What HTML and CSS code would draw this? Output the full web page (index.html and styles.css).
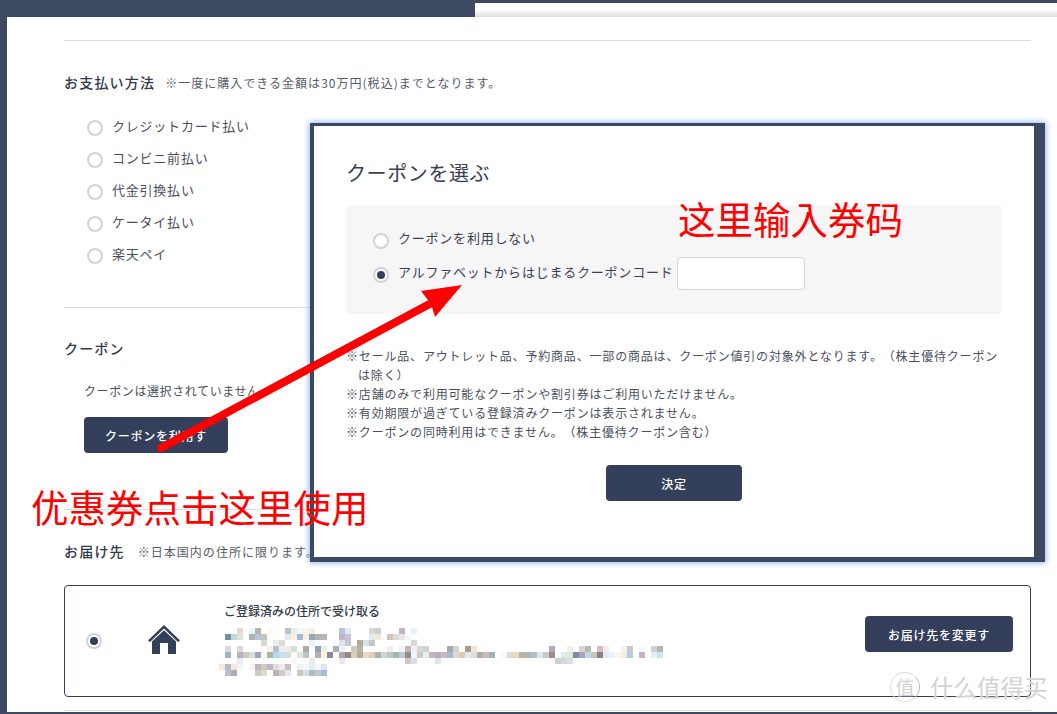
FILE: index.html
```html
<!DOCTYPE html>
<html lang="ja">
<head>
  <meta charset="UTF-8" />
  <meta name="viewport" content="width=device-width, initial-scale=1.0" />
  <title>クーポンを選ぶ</title>
  <link rel="stylesheet" href="styles.css">
</head>
<body>
  <div class="topbar"><div class="topbar-fill"></div></div>

  <main class="sheet">
    <hr class="rule rule-first">

    <!-- Payment -->
    <section>
      <div class="section-head section-head-low">
        <h2>お支払い方法</h2>
        <span class="section-note">※一度に購入できる金額は30万円(税込)までとなります。</span>
      </div>
      <ul class="radio-list">
        <li><span class="radio"></span>クレジットカード払い</li>
        <li><span class="radio"></span>コンビニ前払い</li>
        <li><span class="radio"></span>代金引換払い</li>
        <li><span class="radio"></span>ケータイ払い</li>
        <li><span class="radio"></span>楽天ペイ</li>
      </ul>
    </section>

    <hr class="rule rule-payment">

    <!-- Coupon -->
    <section class="coupon">
      <div class="section-head">
        <h2>クーポン</h2>
      </div>
      <p class="coupon-state">クーポンは選択されていません</p>
      <button class="btn btn-coupon" type="button">クーポンを利用す</button>
    </section>

    <hr class="rule rule-coupon">

    <!-- Delivery -->
    <section>
      <div class="section-head section-head-low">
        <h2>お届け先</h2>
        <span class="section-note section-note-wide">※日本国内の住所に限ります。</span>
      </div>
      <div class="address-card">
        <span class="radio radio-on"></span>
        <svg class="house" viewBox="0 0 32 29" aria-hidden="true">
          <path d="M0 15.5 16 0l16 15.500-2 1.600L16 3.600 2 17.100z" fill="#343f5b"/>
          <path d="M4 16.500 16 5.200l12 11.300V29h-8v-11h-8v11H4z" fill="#343f5b"/>
        </svg>
        <div class="address-text">
          <strong>ご登録済みの住所で受け取る</strong>
          <svg class="mosaic" viewBox="0 0 450 48" aria-hidden="true">
            <g transform="translate(1 0)">
              <rect x="12" y="0" fill="#e8d8d0"/><rect x="24" y="0" fill="#e8f4fa"/><rect x="30" y="0" fill="#b0b4b0"/><rect x="42" y="0" fill="#fdf8f0"/><rect x="60" y="0" fill="#b8c4d4"/><rect x="66" y="0" fill="#e8eee4"/><rect x="72" y="0" fill="#eefafc"/><rect x="78" y="0" fill="#f4f4f0"/><rect x="84" y="0" fill="#f8eee0"/><rect x="114" y="0" fill="#b8c4dc"/><rect x="120" y="0" fill="#e8e8ee"/><rect x="144" y="0" fill="#d8d8d0"/><rect x="150" y="0" fill="#c4d0d4"/><rect x="174" y="0" fill="#b8b8c4"/><rect x="186" y="0" fill="#e4f4fc"/>
              <rect x="0" y="6" fill="#7090a8"/><rect x="6" y="6" fill="#c8d4dc"/><rect x="12" y="6" fill="#dce4e0"/><rect x="24" y="6" fill="#b0b4b0"/><rect x="30" y="6" fill="#b8c4dc"/><rect x="36" y="6" fill="#c0c4b8"/><rect x="60" y="6" fill="#e8e8f0"/><rect x="66" y="6" fill="#fcf0dc"/><rect x="72" y="6" fill="#a8b8dc"/><rect x="78" y="6" fill="#fcf0e0"/><rect x="84" y="6" fill="#94aabc"/><rect x="90" y="6" fill="#b0b4b0"/><rect x="96" y="6" fill="#b4b8b4"/><rect x="114" y="6" fill="#c8b0c0"/><rect x="120" y="6" fill="#c4c4dc"/><rect x="144" y="6" fill="#e0ecf4"/><rect x="150" y="6" fill="#f4e8d0"/><rect x="162" y="6" fill="#d0c4b4"/><rect x="168" y="6" fill="#dcdcd8"/><rect x="174" y="6" fill="#ece4e8"/><rect x="180" y="6" fill="#f4f8fc"/>
              <rect x="36" y="12" fill="#d8d8cc"/><rect x="48" y="12" fill="#f4e8e4"/><rect x="54" y="12" fill="#dcdcdc"/><rect x="84" y="12" fill="#e8f4fc"/><rect x="114" y="12" fill="#dce4f0"/><rect x="120" y="12" fill="#c8c8d0"/><rect x="132" y="12" fill="#b0aca4"/><rect x="138" y="12" fill="#dce0e8"/><rect x="144" y="12" fill="#c4c4cc"/><rect x="186" y="12" fill="#d8d8d8"/>
              <rect x="0" y="18" fill="#d8dcdc"/><rect x="12" y="18" fill="#d8dcdc"/><rect x="42" y="18" fill="#f8f0e8"/><rect x="48" y="18" fill="#b8c0cc"/><rect x="54" y="18" fill="#ecf0f4"/><rect x="60" y="18" fill="#f8ecd8"/><rect x="66" y="18" fill="#d0e0e0"/><rect x="78" y="18" fill="#a8aca4"/><rect x="90" y="18" fill="#90a4b4"/><rect x="96" y="18" fill="#e8f0f4"/><rect x="108" y="18" fill="#a8b0b8"/><rect x="114" y="18" fill="#f0f0f4"/><rect x="126" y="18" fill="#d0ccb8"/><rect x="132" y="18" fill="#b4b4a8"/><rect x="162" y="18" fill="#f0f0f0"/><rect x="174" y="18" fill="#f0f4f8"/><rect x="180" y="18" fill="#c8b4b4"/><rect x="186" y="18" fill="#ecf0f8"/><rect x="192" y="18" fill="#d8d8d4"/><rect x="198" y="18" fill="#d0d0dc"/><rect x="222" y="18" fill="#a0a8b0"/><rect x="228" y="18" fill="#d4d4c8"/><rect x="240" y="18" fill="#a89c8c"/><rect x="246" y="18" fill="#ece4e0"/><rect x="324" y="18" fill="#b0a8c8"/><rect x="342" y="18" fill="#f0f4e8"/><rect x="354" y="18" fill="#d8d4d0"/><rect x="360" y="18" fill="#b8b8ac"/><rect x="372" y="18" fill="#d8bcc0"/><rect x="378" y="18" fill="#f4ece8"/><rect x="396" y="18" fill="#f4f4ec"/><rect x="402" y="18" fill="#c8c8c8"/><rect x="414" y="18" fill="#f0fcfc"/><rect x="426" y="18" fill="#ccd0d8"/><rect x="432" y="18" fill="#b0b8a8"/>
              <rect x="0" y="24" fill="#9cb4c8"/><rect x="12" y="24" fill="#bcb0b8"/><rect x="18" y="24" fill="#ccc8c4"/><rect x="24" y="24" fill="#dcdcdc"/><rect x="30" y="24" fill="#a0a8c0"/><rect x="36" y="24" fill="#fcfcf0"/><rect x="42" y="24" fill="#a8b8a8"/><rect x="48" y="24" fill="#b4d8ec"/><rect x="54" y="24" fill="#c8e0f0"/><rect x="60" y="24" fill="#d8dcdc"/><rect x="66" y="24" fill="#fafcf8"/><rect x="72" y="24" fill="#e4e4e0"/><rect x="78" y="24" fill="#bcc4cc"/><rect x="90" y="24" fill="#b8b0ac"/><rect x="96" y="24" fill="#fcf4dc"/><rect x="102" y="24" fill="#8888a4"/><rect x="114" y="24" fill="#b0a4a8"/><rect x="120" y="24" fill="#948890"/><rect x="126" y="24" fill="#dcd0b0"/><rect x="132" y="24" fill="#b0aca0"/><rect x="138" y="24" fill="#ecd8c4"/><rect x="144" y="24" fill="#dcd0b8"/><rect x="150" y="24" fill="#b0b0a4"/><rect x="156" y="24" fill="#ccd8d8"/><rect x="162" y="24" fill="#c4c4c0"/><rect x="168" y="24" fill="#a4b4bc"/><rect x="174" y="24" fill="#c0c8d0"/><rect x="180" y="24" fill="#889088"/><rect x="186" y="24" fill="#eef4fa"/><rect x="192" y="24" fill="#ccccc4"/><rect x="198" y="24" fill="#e4f4ec"/><rect x="204" y="24" fill="#c8b4c4"/><rect x="210" y="24" fill="#c0aac0"/><rect x="216" y="24" fill="#c8b8c8"/><rect x="222" y="24" fill="#a8b8cc"/><rect x="228" y="24" fill="#d8d8d8"/><rect x="234" y="24" fill="#e4c8a8"/><rect x="240" y="24" fill="#dceaf4"/><rect x="246" y="24" fill="#e4dcd8"/><rect x="252" y="24" fill="#acb0a8"/><rect x="258" y="24" fill="#d0b8c0"/><rect x="264" y="24" fill="#a4b4b4"/><rect x="276" y="24" fill="#f4fafc"/><rect x="282" y="24" fill="#dcdcdc"/><rect x="288" y="24" fill="#f0d8b4"/><rect x="294" y="24" fill="#b8b4a8"/><rect x="300" y="24" fill="#b8b4b0"/><rect x="306" y="24" fill="#b0c0d0"/><rect x="312" y="24" fill="#e0e4ec"/><rect x="318" y="24" fill="#c4ccd0"/><rect x="324" y="24" fill="#9c8c88"/><rect x="336" y="24" fill="#e0ece0"/><rect x="342" y="24" fill="#e0e8dc"/><rect x="348" y="24" fill="#7c8ca4"/><rect x="354" y="24" fill="#a8a4b8"/><rect x="360" y="24" fill="#c0d8ec"/><rect x="366" y="24" fill="#c8c4b4"/><rect x="372" y="24" fill="#8c7c94"/><rect x="378" y="24" fill="#e0e8f4"/><rect x="384" y="24" fill="#e4f4fa"/><rect x="390" y="24" fill="#f8f8e8"/><rect x="396" y="24" fill="#f0f0e0"/><rect x="402" y="24" fill="#b4cce4"/><rect x="414" y="24" fill="#c8b0c0"/><rect x="426" y="24" fill="#e4ecf4"/><rect x="432" y="24" fill="#cce4f8"/>
              <rect x="12" y="30" fill="#e8ecf4"/><rect x="66" y="30" fill="#f4fafc"/><rect x="84" y="30" fill="#e8e8e8"/><rect x="114" y="30" fill="#e8e8f0"/><rect x="180" y="30" fill="#d0c8c8"/><rect x="186" y="30" fill="#dcdce4"/><rect x="210" y="30" fill="#dce4e8"/><rect x="330" y="30" fill="#ccd0d4"/><rect x="336" y="30" fill="#d8d8dc"/><rect x="342" y="30" fill="#dce0ec"/>
              <rect x="-6" y="36" fill="#f8e8d8"/><rect x="0" y="36" fill="#b4bcc8"/><rect x="6" y="36" fill="#f8e8d0"/><rect x="12" y="36" fill="#eefaf8"/><rect x="24" y="36" fill="#fcf4ec"/><rect x="30" y="36" fill="#b8b8c0"/><rect x="36" y="36" fill="#d4ccb8"/><rect x="42" y="36" fill="#c0b4d0"/><rect x="48" y="36" fill="#e4dcd8"/><rect x="54" y="36" fill="#f0ecec"/><rect x="60" y="36" fill="#c8bcc0"/><rect x="72" y="36" fill="#e8f4f8"/><rect x="78" y="36" fill="#f0f8fc"/><rect x="84" y="36" fill="#e0f0f4"/><rect x="90" y="36" fill="#f0fafc"/><rect x="96" y="36" fill="#e0e4f0"/>
              <rect x="0" y="42" fill="#b8c0d8"/><rect x="6" y="42" fill="#b4a8b8"/><rect x="30" y="42" fill="#d0ccc4"/><rect x="36" y="42" fill="#d8dccc"/><rect x="48" y="42" fill="#b4b4bc"/><rect x="54" y="42" fill="#d8c8c0"/><rect x="60" y="42" fill="#e4e8f4"/><rect x="72" y="42" fill="#ccc8c0"/><rect x="78" y="42" fill="#d8e0e4"/><rect x="84" y="42" fill="#b0bcc8"/><rect x="90" y="42" fill="#c0c8d0"/><rect x="96" y="42" fill="#a8bcdc"/>
            </g>
          </svg>
        </div>
        <button class="btn btn-address" type="button">お届け先を変更す</button>
      </div>
    </section>

    <hr class="rule rule-last">
  </main>

  <!-- Coupon dialog -->
  <div class="modal" role="dialog" aria-label="クーポンを選ぶ">
    <h3>クーポンを選ぶ</h3>
    <div class="modal-panel">
      <div class="modal-row modal-row-off"><span class="radio"></span><span class="row-label">クーポンを利用しない</span></div>
      <div class="modal-row">
        <span class="radio radio-on"></span><span class="row-label">アルファベットからはじまるクーポンコード</span>
        <input class="code-input" type="text" aria-label="クーポンコード">
      </div>
    </div>
    <ul class="modal-notes">
      <li>※セール品、アウトレット品、予約商品、一部の商品は、クーポン値引の対象外となります。（株主優待クーポンは除く）</li>
      <li>※店舗のみで利用可能なクーポンや割引券はご利用いただけません。</li>
      <li>※有効期限が過ぎている登録済みクーポンは表示されません。</li>
      <li>※クーポンの同時利用はできません。（株主優待クーポン含む）</li>
    </ul>
    <button class="btn btn-decide" type="button">決定</button>
  </div>

  <!-- Annotations drawn over the screenshot -->
  <svg class="arrow" viewBox="0 0 1057 714" aria-hidden="true">
    <line x1="161" y1="448" x2="437" y2="300" stroke="#f00" stroke-width="8" stroke-linecap="round"/>
    <polygon points="462,285 421,291 431,304 435,317" fill="#f00"/>
  </svg>
  <p class="note-red note-input">这里输入券码</p>
  <p class="note-red note-click">优惠券点击这里使用</p>

  <div class="watermark"><span class="watermark-mark">值</span>什么值得买</div>
</body>
</html>
```

FILE: styles.css
```css
* {
  box-sizing: border-box;
}

body {
  margin: 0;
  width: 1057px;
  height: 714px;
  overflow: hidden;
  position: relative;
  display: flex;
  flex-direction: column;
  background-color: #3d4861;
  color: #3a4050;
  font-family: "Noto Sans CJK JP", "Noto Sans", sans-serif;
  text-spacing-trim: space-all;
}

h2, h3, p, ul {
  margin: 0;
  padding: 0;
}

ul {
  list-style: none;
}

.topbar {
  height: 17px;
  padding: 3px 0 0 475px;
}

.topbar-fill {
  height: 14px;
  background: linear-gradient(#fff 45%, #dcdcdc);
}

.sheet {
  height: 695px;
  margin-left: 7px;
  padding: 0 26px 0 57px;
  background-color: #fff;
  overflow: hidden;
}

.rule {
  margin: 0;
  border: 0;
  border-top: 1px solid #ddd;
}

.rule-first { margin-top: 23px; }
.rule-payment { margin-top: 41px; }
.rule-coupon { margin-top: 56px; }
.rule-last { margin-top: 13px; }

.section-head {
  display: flex;
  align-items: baseline;
  gap: 10px;
  height: 22px;
  line-height: 18px;
  margin-top: 31px;
}

.section-head-low {
  margin-top: 32px;
}

.section-head h2 {
  font-size: 14px;
  font-weight: 500;
  letter-spacing: 0.085em;
  color: #333a4a;
}

.section-note {
  font-size: 12px;
  letter-spacing: 0.085em;
  color: #555b68;
}

.section-note-wide {
  margin-left: 3px;
}

.radio-list {
  display: flex;
  flex-direction: column;
  gap: 10px;
  margin-top: 21px;
  padding-left: 23px;
  font-size: 13px;
  line-height: 20px;
  letter-spacing: 0.06em;
  color: #4a4f5c;
}

.radio-list li {
  display: flex;
  align-items: flex-start;
  gap: 9px;
  height: 22px;
}

.radio {
  position: relative;
  flex: none;
  width: 16px;
  height: 16px;
  margin-top: 4px;
  border: 2px solid #d2d3d8;
  border-radius: 50%;
  background-color: #fff;
}

.radio-on::after {
  content: "";
  position: absolute;
  top: 2px;
  left: 2px;
  width: 8px;
  height: 8px;
  border-radius: 50%;
  background-color: #343f5b;
}

.coupon-state {
  height: 20px;
  margin-top: 19px;
  padding: 2px 0 0 20px;
  font-size: 12px;
  line-height: 18px;
  letter-spacing: 0.05em;
  color: #4a4f5c;
}

.btn {
  display: block;
  border: 0;
  border-radius: 4px;
  background-color: #343f5b;
  color: #fff;
  font-family: inherit;
  font-size: 12px;
  font-weight: 500;
  letter-spacing: 0.06em;
  height: 36px;
}

.btn-coupon {
  width: 144px;
  margin: 17px 0 0 20px;
}

.address-card {
  display: flex;
  align-items: flex-start;
  height: 112px;
  margin-top: 21px;
  padding-left: 21px;
  border: 1px solid #343f5b;
  border-radius: 4px;
}

.address-card .radio {
  margin-top: 47px;
}

.house {
  flex: none;
  width: 32px;
  height: 29px;
  margin-left: 46px;
  margin-top: 39px;
}

.address-text {
  flex: none;
  width: 450px;
  margin-left: 44px;
  margin-top: 16px;
}

.address-text strong {
  display: block;
  font-size: 12px;
  font-weight: 500;
  line-height: 18px;
  color: #333a4a;
}

.mosaic {
  display: block;
  width: 450px;
  height: 48px;
  margin-top: 8px;
  overflow: visible;
}

.mosaic rect {
  width: 6px;
  height: 6px;
}

.btn-address {
  width: 148px;
  margin: 30px 0 0 191px;
}

/* dialog */
.modal {
  position: absolute;
  top: 123px;
  left: 310px;
  width: 735px;
  height: 439px;
  padding: 31px 32px 0;
  border-style: solid;
  border-color: #3d4861;
  border-width: 3px 11px 5px 4px;
  background-color: #fff;
  box-shadow: 0 0 6px 1px #8fb8f0;
}

.modal h3 {
  height: 30px;
  font-size: 20px;
  font-weight: 400;
  letter-spacing: 0.03em;
  line-height: 32px;
  color: #3a4050;
}

.modal-panel {
  height: 109px;
  margin-top: 18px;
  padding: 18px 0 0 27px;
  border-radius: 4px;
  background-color: #f6f6f6;
  font-size: 13px;
  letter-spacing: 0.06em;
  color: #3a4050;
}

.modal-row {
  display: flex;
  align-items: center;
  gap: 9px;
  height: 33px;
}

.modal-row-off {
  height: 34px;
}

.modal-row .radio {
  margin-top: 2px;
}

.row-label {
  padding-bottom: 4px;
}

.modal-row-off .row-label {
  padding-bottom: 6px;
}

.code-input {
  width: 128px;
  height: 33px;
  margin-left: -5px;
  border: 1px solid #d2d3dc;
  border-radius: 4px;
  background-color: #fff;
}

.modal-notes {
  margin: 32px 0 0;
  font-size: 12px;
  line-height: 19px;
  letter-spacing: 0.068em;
  color: #4a4f5c;
}

.modal-notes li {
  padding-left: 1em;
  text-indent: -1em;
}

.btn-decide {
  width: 136px;
  margin: 24px auto 0;
}

/* red annotations */
.arrow {
  position: absolute;
  top: 0;
  left: 0;
  width: 1057px;
  height: 714px;
  pointer-events: none;
}

.note-red {
  position: absolute;
  color: #f00;
  font-family: "Noto Sans CJK SC", sans-serif;
  font-size: 37.5px;
  line-height: 40px;
  white-space: nowrap;
}

.note-input {
  top: 198px;
  left: 678px;
}

.note-click {
  top: 486px;
  left: 31px;
}

/* site watermark */
.watermark {
  position: absolute;
  top: 672px;
  left: 890px;
  display: flex;
  align-items: center;
  gap: 10px;
  font-family: "Noto Sans CJK SC", sans-serif;
  font-size: 23.5px;
  line-height: 30px;
  color: #d2d2d2;
  text-shadow: 0 0 2px #fff;
  white-space: nowrap;
}

.watermark-mark {
  width: 30px;
  height: 30px;
  border: 1px solid #ddd;
  border-right-color: #bbb;
  border-radius: 50%;
  font-size: 19px;
  line-height: 27px;
  text-align: center;
}
```
